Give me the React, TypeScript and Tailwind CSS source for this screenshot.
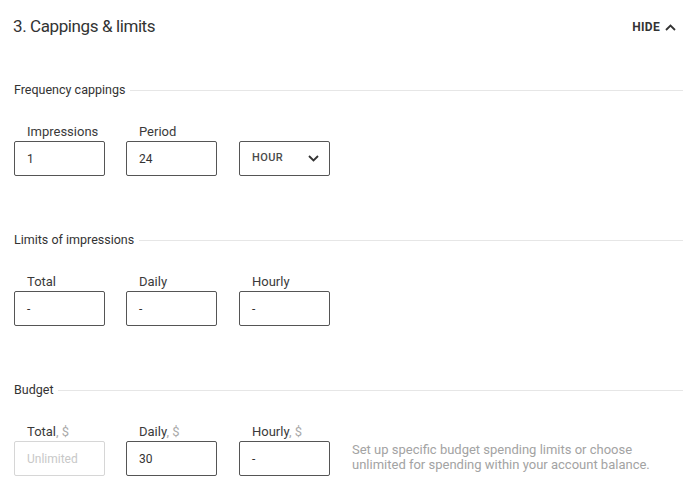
import React from "react";

const font = { fontFamily: "Roboto, 'Noto Sans', sans-serif" };

function Heading({ title }: { title: string }) {
  return (
    <div className="flex items-center h-[18px] pr-[17px]">
      <span className="text-[12.5px] text-[#333] leading-[18px] whitespace-nowrap">{title}</span>
      <div className="flex-1 ml-[5px] h-px bg-[#e6e6e6]" />
    </div>
  );
}

function Field({
  label,
  unit,
  value,
  muted,
  select,
  shift,
}: {
  label: string;
  unit?: boolean;
  value?: string;
  muted?: boolean;
  select?: boolean;
  shift?: boolean;
}) {
  return (
    <div className={"flex flex-col w-[91px] " + (shift ? "ml-[1px]" : "")}>
      <div className="h-[17px] mb-[1px] pl-[13px] text-[13px] leading-[17px] text-[#3a3a3a] whitespace-nowrap">
        {label}
        {unit && <span className="text-[#aaa]">, $</span>}
      </div>
      <div
        className={
          "h-[35px] rounded-[2px] border flex items-center pl-[12px] pr-[10px] text-[12px] " +
          (muted ? "border-[#d6d6d6] text-[#c8c8c8]" : "border-[#555] text-[#333]")
        }
      >
        {select ? (
          <div className="flex w-full items-center justify-between">
            <span className="text-[11px] font-medium tracking-[0.4px] text-[#4a4a4a]">HOUR</span>
            <svg width="11" height="7" viewBox="0 0 11 7" fill="none">
              <path d="M1 1l4.5 4.5L10 1" stroke="#333" strokeWidth="1.8" />
            </svg>
          </div>
        ) : (
          <span>{value}</span>
        )}
      </div>
    </div>
  );
}

export default function App() {
  return (
    <div className="w-[700px] h-[497px] bg-white pl-[14px] overflow-hidden" style={font}>
      <div className="h-[54px] flex items-center justify-between pr-[24px]">
        <span className="text-[17px] tracking-[-0.4px] text-[#333] -ml-[1px]">3. Cappings &amp; limits</span>
        <span className="flex items-center gap-[5px] text-[12px] font-bold text-[#333] tracking-[0.3px]">
          HIDE
          <svg width="11" height="7" viewBox="0 0 11 7" fill="none">
            <path d="M1 6l4.5-4.5L10 6" stroke="#333" strokeWidth="1.8" />
          </svg>
        </span>
      </div>

      <div className="mt-[27px]">
        <Heading title="Frequency cappings" />
      </div>
      <div className="mt-[24px] flex gap-[21px]">
        <Field label="Impressions" value="1" />
        <Field label="Period" value="24" />
        <Field label="" select shift />
      </div>

      <div className="mt-[55px]">
        <Heading title="Limits of impressions" />
      </div>
      <div className="mt-[24px] flex gap-[21px]">
        <Field label="Total" value="-" />
        <Field label="Daily" value="-" />
        <Field label="Hourly" value="-" shift />
      </div>

      <div className="mt-[55px]">
        <Heading title="Budget" />
      </div>
      <div className="mt-[24px] flex gap-[21px]">
        <Field label="Total" unit value="Unlimited" muted />
        <Field label="Daily" unit value="30" />
        <Field label="Hourly" unit value="-" shift />
        <div className="ml-[1px] self-end mb-[4px] text-[13px] leading-[15px] text-[#a3a3a3] whitespace-nowrap">
          Set up specific budget spending limits or choose
          <br />
          unlimited for spending within your account balance.
        </div>
      </div>
    </div>
  );
}
